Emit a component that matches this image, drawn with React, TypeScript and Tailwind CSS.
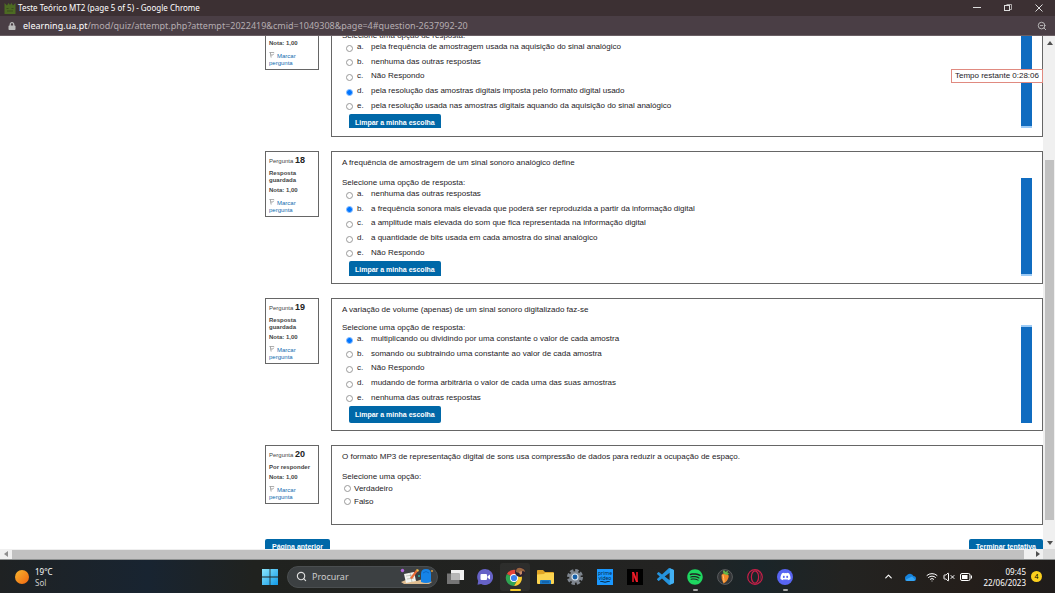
import React from "react";
import { FaDiscord, FaLock, FaSpotify } from "react-icons/fa";
import { ChevronUp, Search, VolumeX, Wifi, ZoomOut } from "lucide-react";

type Choice = { letter: string; text: string };
type Question = {
  number: number;
  state?: string;
  text?: string;
  choices: Choice[];
  selected: number;
  view: "cut" | "start" | "end";
};

const letters = ["a.", "b.", "c.", "d.", "e."];
const choices = (...texts: string[]): Choice[] =>
  texts.map((text, i) => ({ letter: letters[i], text }));

const questions: Question[] = [
  {
    number: 17,
    choices: choices(
      "pela frequência de amostragem usada na aquisição do sinal analógico",
      "nenhuma das outras respostas",
      "Não Respondo",
      "pela resolução das amostras digitais imposta pelo formato digital usado",
      "pela resolução usada nas amostras digitais aquando da aquisição do sinal analógico",
    ),
    selected: 3,
    view: "cut",
  },
  {
    number: 18,
    state: "Resposta guardada",
    text: "A frequência de amostragem de um sinal sonoro analógico define",
    choices: choices(
      "nenhuma das outras respostas",
      "a frequência sonora mais elevada que poderá ser reproduzida a partir da informação digital",
      "a amplitude mais elevada do som que fica representada na informação digital",
      "a quantidade de bits usada em cada amostra do sinal analógico",
      "Não Respondo",
    ),
    selected: 1,
    view: "start",
  },
  {
    number: 19,
    state: "Resposta guardada",
    text: "A variação de volume (apenas) de um sinal sonoro digitalizado faz-se",
    choices: choices(
      "multiplicando ou dividindo por uma constante o valor de cada amostra",
      "somando ou subtraindo uma constante ao valor de cada amostra",
      "Não Respondo",
      "mudando de forma arbitrária o valor de cada uma das suas amostras",
      "nenhuma das outras respostas",
    ),
    selected: 0,
    view: "end",
  },
];

const radioStyle =
  "size-[7px] shrink-0 appearance-none rounded-full border border-[#999] bg-white checked:border-[#8cc0ff] checked:bg-[#0075ff]";

function TitleBar() {
  return (
    <header className="shrink-0 font-['Noto_Sans','Open_Sans',sans-serif] text-white">
      <div className="flex h-4 items-center bg-[#3c3033] pl-1">
        <svg viewBox="0 0 12 12" className="size-3" aria-hidden="true">
          <path d="M.5 1L3 3.500 4.500 1 6 3 7.500 1 9 3.500 11.500 1V12H.5Z" fill="#4d6b23" />
          <path d="M2.500 6.500h2M7.500 6.500h2M3 9h6" stroke="#3a4d1e" />
        </svg>
        <h1 className="ml-[2px] text-[8px] leading-4">Teste Teórico MT2 (page 5 of 5) - Google Chrome</h1>
        <div className="ml-auto flex items-center">
          <button aria-label="Minimizar" className="flex h-4 w-[31px] items-center justify-center">
            <svg viewBox="0 0 8 8" className="size-2"><path d="M0 3.500h8" stroke="#ddd" /></svg>
          </button>
          <button aria-label="Restaurar" className="flex h-4 w-[31px] items-center justify-center">
            <svg viewBox="0 0 8 8" className="size-2" fill="none" stroke="#ddd">
              <rect x=".5" y="1.500" width="5" height="5" />
              <path d="M2.500 .5h5v5h-2" opacity=".7" />
            </svg>
          </button>
          <button aria-label="Fechar" className="flex h-4 w-8 items-center justify-center">
            <svg viewBox="0 0 8 8" className="size-2"><path d="M.5.5l7 7M7.500.5l-7 7" stroke="#ddd" /></svg>
          </button>
        </div>
      </div>
      <div className="flex h-5 items-center border-b border-[#6a5f64] bg-[#4a3e45] pr-2 pl-2">
        <FaLock className="size-2 text-[#bbb]" aria-hidden="true" />
        <p className="ml-[7px] text-[9px] leading-4 text-[#b5adb1]">
          <span className="text-white">elearning.ua.pt</span>
          /mod/quiz/attempt.php?attempt=2022419&amp;cmid=1049308&amp;page=4#question-2637992-20
        </p>
        <button aria-label="Reduzir" className="ml-auto">
          <ZoomOut className="size-[10px] text-[#ccc]" />
        </button>
      </div>
    </header>
  );
}

function InfoBox({ number, state, cut }: { number: number; state?: string; cut?: boolean }) {
  return (
    <aside
      className={
        "w-[54px] shrink-0 self-start border border-[#666] pr-1 pb-[2px] pl-[3px] text-[6px] leading-[7px] font-bold text-[#444] " +
        (cut ? "border-t-0 pt-1" : "pt-[3px]")
      }
    >
      {!cut && (
        <h2 className="text-[6px] leading-[10px] font-normal">
          Pergunta <span className="text-[9px] font-bold text-[#222]">{number}</span>
        </h2>
      )}
      {state && <p className="mt-1">{state}</p>}
      <p className={cut ? "" : "mt-[3px]"}>Nota: 1,00</p>
      <a href="#marcar" className="mt-[5px] block font-normal text-[#0f6cb0]">
        <svg viewBox="0 0 7 7" className="mr-[2px] inline size-[6px] align-baseline" fill="none" stroke="#999" aria-hidden="true">
          <path d="M.5 .5h5.500M1.500 .5l1 6M2 3.500h2.500l1-1.500" />
        </svg>
        Marcar pergunta
      </a>
    </aside>
  );
}

function AnswerScrollbar({ end }: { end: boolean }) {
  return (
    <div
      aria-hidden="true"
      className={
        "w-[11px] shrink-0 border-[#9dcbf5] bg-[#106cc0] " + (end ? "border-t-2" : "border-b-2")
      }
    />
  );
}

function QuestionRow({ q }: { q: Question }) {
  const cut = q.view === "cut";
  return (
    <section className="mb-[14px] flex gap-3">
      <InfoBox number={q.number} state={q.state} cut={cut} />
      <div
        className={
          "min-w-0 flex-1 border border-[#666] px-[10px] text-[8px] text-[#1d2125] " +
          (cut ? "border-t-0 pb-2" : "pt-[6px] pb-[7px]")
        }
      >
        {q.text && <p className="mb-[10px] leading-[10px]">{q.text}</p>}
        <div className={"flex " + (cut ? "h-[92px]" : "h-[98px]")}>
          <fieldset
            className={
              "flex min-w-0 flex-1 flex-col overflow-hidden " + (q.view === "end" ? "justify-end" : "")
            }
          >
            <div className={"flex shrink-0 flex-col items-start " + (cut ? "-mt-[5px]" : "")}>
              <p className="h-[9px] leading-[9px]">Selecione uma opção de resposta:</p>
              <div className="grid h-[73px] grid-rows-5 pl-1">
                {q.choices.map((c, i) => (
                  <label key={c.letter} className="flex items-center leading-[10px]">
                    <input
                      type="radio"
                      name={"q" + q.number}
                      defaultChecked={i === q.selected}
                      className={"mt-[2px] " + radioStyle}
                    />
                    <span className="ml-1 w-[14px]">{c.letter}</span>
                    <span>{c.text}</span>
                  </label>
                ))}
              </div>
              <button className="mt-px ml-[7px] h-[17px] rounded-[2px] bg-[#0068a8] px-[6px] text-[7px] leading-[17px] font-bold text-white">
                Limpar a minha escolha
              </button>
            </div>
          </fieldset>
          <AnswerScrollbar end={q.view === "end"} />
        </div>
      </div>
    </section>
  );
}

function QuizPage() {
  return (
    <main className="relative min-w-0 flex-1 overflow-hidden bg-white pl-[265px] font-['Liberation_Sans',Arial,sans-serif]">
      {questions.map((q) => (
        <QuestionRow key={q.number} q={q} />
      ))}
      <section className="flex gap-3">
        <InfoBox number={20} state="Por responder" />
        <div className="min-w-0 flex-1 border border-[#666] px-[10px] pt-[6px] pb-4 text-[8px] text-[#1d2125]">
          <p className="mb-[10px] leading-[10px]">
            O formato MP3 de representação digital de sons usa compressão de dados para reduzir a ocupação de espaço.
          </p>
          <fieldset>
            <p className="leading-[10px]">Selecione uma opção:</p>
            {["Verdadeiro", "Falso"].map((t) => (
              <label key={t} className="flex h-[13px] items-center gap-[3px] pl-[2px]">
                <input type="radio" name="q20" className={radioStyle} />
                {t}
              </label>
            ))}
          </fieldset>
        </div>
      </section>
      <div className="mt-[14px] flex justify-between text-[7px] leading-4 font-bold text-white">
        <button className="rounded-[2px] bg-[#0068a8] px-[7px]">Página anterior</button>
        <button className="rounded-[2px] bg-[#0068a8] px-[7px]">Terminar tentativa</button>
      </div>
      <p className="absolute top-[33px] right-0 border border-[#e08a80] bg-white px-[3px] text-[8px] leading-3 text-[#1d2125]">
        Tempo restante 0:28:06
      </p>
    </main>
  );
}

function Arrow({ d }: { d: string }) {
  return (
    <svg viewBox="0 0 6 6" className="size-[6px] shrink-0" fill="#505050" aria-hidden="true">
      <path d={d} />
    </svg>
  );
}

function AppButton({ label, active, running, children }: { label: string; active?: boolean; running?: boolean; children: React.ReactNode }) {
  return (
    <button
      aria-label={label}
      className={
        "relative flex h-7 w-[30px] items-center justify-center rounded-[3px] " + (active ? "bg-white/5" : "")
      }
    >
      {children}
      {active && <span className="absolute bottom-0 h-[2px] w-[11px] rounded-full bg-[#f5cc2f]" />}
      {running && <span className="absolute bottom-0 h-[2px] w-[5px] rounded-full bg-[#aaa]" />}
    </button>
  );
}

function Taskbar() {
  return (
    <footer className="grid h-[33px] shrink-0 grid-cols-[1fr_auto_1fr] items-center bg-[linear-gradient(90deg,#1f2223_0%,#182431_14%,#20221f_24%,#232322_64%,#1a2529_72%,#232321_80%,#241e1a_92%,#1f1c1b_100%)] font-['Noto_Sans','Open_Sans',sans-serif] text-white">
      <div className="flex items-center gap-[6px] pl-[15px]">
        <span className="size-[14px] rounded-full bg-linear-to-br from-[#f6b52e] to-[#f0640f]" />
        <p className="text-[8px] leading-[11px]">
          19°C
          <br />
          <span className="text-[#ccc]">Sol</span>
        </p>
      </div>
      <nav className="flex items-center">
        <AppButton label="Iniciar">
          <svg viewBox="0 0 16 16" className="size-4">
            <defs>
              <linearGradient id="win" x1="0" y1="0" x2="1" y2="1">
                <stop offset="0" stopColor="#8be6fc" />
                <stop offset="1" stopColor="#1099e8" />
              </linearGradient>
            </defs>
            <path d="M0 0h7.600v7.600H0zM8.400 0H16v7.600H8.400zM0 8.400h7.600V16H0zM8.400 8.400H16V16H8.400z" fill="url(#win)" />
          </svg>
        </AppButton>
        <label className="mr-[2px] ml-[2px] flex h-[22px] w-[151px] items-center rounded-full border border-[#4a4e50] bg-[#3c4042] pr-1 pl-2">
          <Search className="size-[11px] shrink-0 text-[#ddd]" strokeWidth={2.5} />
          <input
            aria-label="Procurar"
            placeholder="Procurar"
            className="ml-[5px] min-w-0 flex-1 bg-transparent text-[9px] outline-none placeholder:text-[#ccc]"
          />
          <svg viewBox="0 0 33 17" className="h-[17px] w-[33px] shrink-0" aria-hidden="true">
            <path d="M1 14Q8 10 17 13q8-4 15 1l-3 2H4Z" fill="#dfbd91" />
            <path d="M4 6l10-2 2 9-10 2Z" fill="#f3f3ee" />
            <path d="M6 8l7-1M7 11l7-1M10 5l2 9" stroke="#8b9b8a" strokeWidth=".5" />
            <path d="M10 10l6-8 2 1-6 8Z" fill="#e66a35" />
            <path d="M16 2l1-1 2 1-1 2Z" fill="#f2c04a" />
            <path d="M21 14V6q0-5 5-5t5 5v8q-5 2-10 0Z" fill="#1683e8" />
            <path d="M23 5q3-3 6 0" stroke="#0a62bd" fill="none" strokeWidth=".8" />
            <circle cx="2.500" cy="2.500" r="1.700" fill="#b367dc" />
            <circle cx="19" cy="8" r="1" fill="#2ab6a7" />
            <circle cx="32" cy="3" r="1" fill="#d89b3c" />
          </svg>
        </label>
        <AppButton label="Vista de tarefas">
          <svg viewBox="0 0 17 16" className="h-4 w-[17px]">
            <path d="M4 1h13v10H4z" fill="#f0f0f0" />
            <path d="M0 4.500h12.500V15H0z" fill="#757575" />
            <path d="M4 4.500h8.500V11H4z" fill="#b7b7b7" />
          </svg>
        </AppButton>
        <AppButton label="Chat">
          <svg viewBox="0 0 16 16" className="size-4">
            <path d="M8 0a8 8 0 1 1-3.800 15L.5 15.700 1.200 12A8 8 0 0 1 8 0Z" fill="#6662c6" />
            <rect x="3.500" y="5" width="6.500" height="6" rx="1" fill="#fff" />
            <path d="M10.500 7.200L13 5.500v5L10.500 8.800Z" fill="#fff" />
          </svg>
        </AppButton>
        <AppButton label="Google Chrome" active>
          <svg viewBox="0 0 20 20" className="size-5">
            <path d="M9 11L1.900 7A8 8 0 0 1 15.900 7Z" fill="#e6453a" />
            <path d="M9 11L1.900 7A8 8 0 0 0 9 19L12.500 13Z" fill="#2fa452" />
            <path d="M9 11V7h6.900A8 8 0 0 1 9 19L12.500 13Z" fill="#f9cd32" />
            <circle cx="9" cy="11" r="4" fill="#fff" />
            <circle cx="9" cy="11" r="3.100" fill="#3e82ee" />
            <circle cx="15" cy="5" r="5" fill="#2b2130" />
            <path d="M11 5q0-5 5-4 4 1 4 4l-2-1-4 2Z" fill="#98653f" />
            <path d="M14 5l3-1v3l-2 1Z" fill="#c58b68" />
          </svg>
        </AppButton>
        <AppButton label="Explorador de Ficheiros">
          <svg viewBox="0 0 17 16" className="h-4 w-[17px]">
            <path d="M0 1.500Q0 1 1 1h5l2 2h8q1 0 1 1v4H0Z" fill="#e0a526" />
            <path d="M0 5.500l7-.5 1-1h9v10q0 1-1 1H1q-1 0-1-1Z" fill="#fcd450" />
            <path d="M3 15v-3q0-1 1-1h9q1 0 1 1v3Z" fill="#1a78c5" />
            <path d="M5 13h7" stroke="#0c4f8f" />
          </svg>
        </AppButton>
        <AppButton label="Definições">
          <svg viewBox="0 0 16 16" className="size-4">
            <circle cx="8" cy="8" r="6.600" fill="none" stroke="#7f868f" strokeWidth="2.800" strokeDasharray="3.400 1.784" />
            <circle cx="8" cy="8" r="4.800" fill="#7f868f" stroke="#7f868f" strokeWidth="2" />
            <circle cx="8" cy="8" r="3" fill="#1760a8" stroke="#dbe6f0" strokeWidth="1.200" />
          </svg>
        </AppButton>
        <AppButton label="Prime Video">
          <span className="flex size-4 flex-col items-center justify-center bg-[#1a98ff] text-[5px] leading-[5px] font-normal text-[#08263e]">
            <span>prime</span>
            <span>video</span>
            <svg viewBox="0 0 10 2" className="h-[2px] w-[10px]"><path d="M0 0q5 2.500 10 0" fill="none" stroke="#08263e" /></svg>
          </span>
        </AppButton>
        <AppButton label="Netflix">
          <svg viewBox="0 0 16 16" className="size-4">
            <path d="M0 0h16v16H0z" fill="#000" />
            <path d="M5 3h2v10H5zM9 3h2v10H9z" fill="#b4101b" />
            <path d="M5 3h2l4 10H9Z" fill="#ef1e2a" />
          </svg>
        </AppButton>
        <AppButton label="Visual Studio Code">
          <svg viewBox="0 0 24 24" className="size-[17px]" fill="#2593dc">
            <path d="M23.15 2.587L18.21.21a1.494 1.494 0 0 0-1.705.29l-9.46 8.63-4.12-3.128a.999.999 0 0 0-1.276.057L.327 7.261A1 1 0 0 0 .326 8.74L3.899 12 .326 15.26a1 1 0 0 0 .001 1.479L1.65 17.94a.999.999 0 0 0 1.276.057l4.12-3.128 9.46 8.63a1.492 1.492 0 0 0 1.704.29l4.942-2.377A1.5 1.5 0 0 0 24 20.06V3.939a1.5 1.5 0 0 0-.85-1.352zm-5.146 14.861L10.826 12l7.178-5.448v10.896z" />
            <path d="M18.004 .2L23.150 2.587A1.500 1.500 0 0 1 24 3.939V20.060a1.500 1.500 0 0 1-.85 1.352L18.004 23.800Z" fill="#42b0f3" />
          </svg>
        </AppButton>
        <AppButton label="Spotify" running>
          <FaSpotify className="size-4 text-[#1ed760]" />
        </AppButton>
        <AppButton label="FL Studio">
          <svg viewBox="0 0 16 16" className="size-4">
            <circle cx="8" cy="8" r="7.400" fill="#343638" stroke="#5b5d5f" />
            <path d="M4.500 6Q6 3.500 9 4.500q3.500 1 2.500 4Q10 13 6.500 14.500 4 10 4.500 6Z" fill="#f28a27" />
            <path d="M6 6q1 4 1 7" stroke="#ffc27a" fill="none" />
            <path d="M7 5Q5 2 7 1l1.500 2L11 1.500 10.500 4l2 .5L10 6Z" fill="#63b548" />
          </svg>
        </AppButton>
        <AppButton label="Opera GX">
          <svg viewBox="0 0 16 16" className="size-4" fill="none" stroke="#c71f49">
            <circle cx="8" cy="8" r="7.300" strokeWidth="1.200" />
            <ellipse cx="8" cy="8" rx="3.600" ry="6.200" strokeWidth="1.200" />
            <path d="M9 1q4.500 1 4.500 7T9 15" opacity=".6" strokeWidth=".8" />
          </svg>
        </AppButton>
        <AppButton label="Discord" running>
          <span className="flex size-4 items-center justify-center rounded-full bg-[#5865f2]">
            <FaDiscord className="size-[11px]" />
          </span>
        </AppButton>
      </nav>
      <div className="flex items-center justify-end pr-[13px]">
        <ChevronUp className="size-[11px]" strokeWidth={2.5} />
        <svg viewBox="0 0 12 8" className="ml-[10px] h-2 w-3" aria-hidden="true">
          <path d="M3 8a3 3 0 0 1-.4-5.500A4 4 0 0 1 9.500 3 2.500 2.500 0 0 1 9.500 8Z" fill="#1683dc" />
          <path d="M1 7L8 3.500 11.500 7l-2 1H3Z" fill="#35a5f5" />
        </svg>
        <Wifi className="ml-[10px] size-3" strokeWidth={2} />
        <VolumeX className="ml-[5px] size-3" />
        <svg viewBox="0 0 12 8" className="ml-[5px] h-2 w-3" aria-hidden="true">
          <rect x=".5" y=".5" width="9.500" height="7" rx="1.500" fill="none" stroke="#fff" />
          <path d="M2 2h5.500v4H2zM11 2.500h1v3h-1z" fill="#fff" />
        </svg>
        <time className="ml-[11px] text-right text-[8px] leading-[11px]">
          09:45
          <br />
          22/06/2023
        </time>
        <span className="ml-[5px] flex size-[11px] items-center justify-center rounded-full bg-[#fbd01e] text-[7px] leading-none text-black">
          4
        </span>
      </div>
    </footer>
  );
}

export default function App() {
  return (
    <div className="flex h-screen flex-col overflow-hidden bg-white">
      <TitleBar />
      <div className="flex min-h-0 flex-1">
        <QuizPage />
        <div aria-hidden="true" className="flex w-3 shrink-0 flex-col items-center bg-[#f0f0f0] pl-px">
          <span className="flex h-[14px] items-center"><Arrow d="M0 5l3-4 3 4Z" /></span>
          <span className="w-full flex-[110]" />
          <span className="w-[9px] flex-[360] bg-[#c1c1c1]" />
          <span className="w-full flex-[17]" />
          <span className="flex h-3 items-center"><Arrow d="M0 1l3 4 3-4Z" /></span>
        </div>
      </div>
      <div aria-hidden="true" className="flex h-[10px] shrink-0 items-center bg-[#f0f0f0]">
        <span className="flex w-3 justify-center opacity-60"><Arrow d="M5 0L1 3l4 3Z" /></span>
        <span className="h-[9px] flex-1 bg-[#c1c1c1]" />
        <span className="flex w-[19px] justify-center pl-2"><Arrow d="M1 0l4 3-4 3Z" /></span>
        <span className="h-full w-3 bg-[#dcdcdc]" />
      </div>
      <div className="h-px shrink-0 bg-[#8d9090]" />
      <Taskbar />
    </div>
  );
}
